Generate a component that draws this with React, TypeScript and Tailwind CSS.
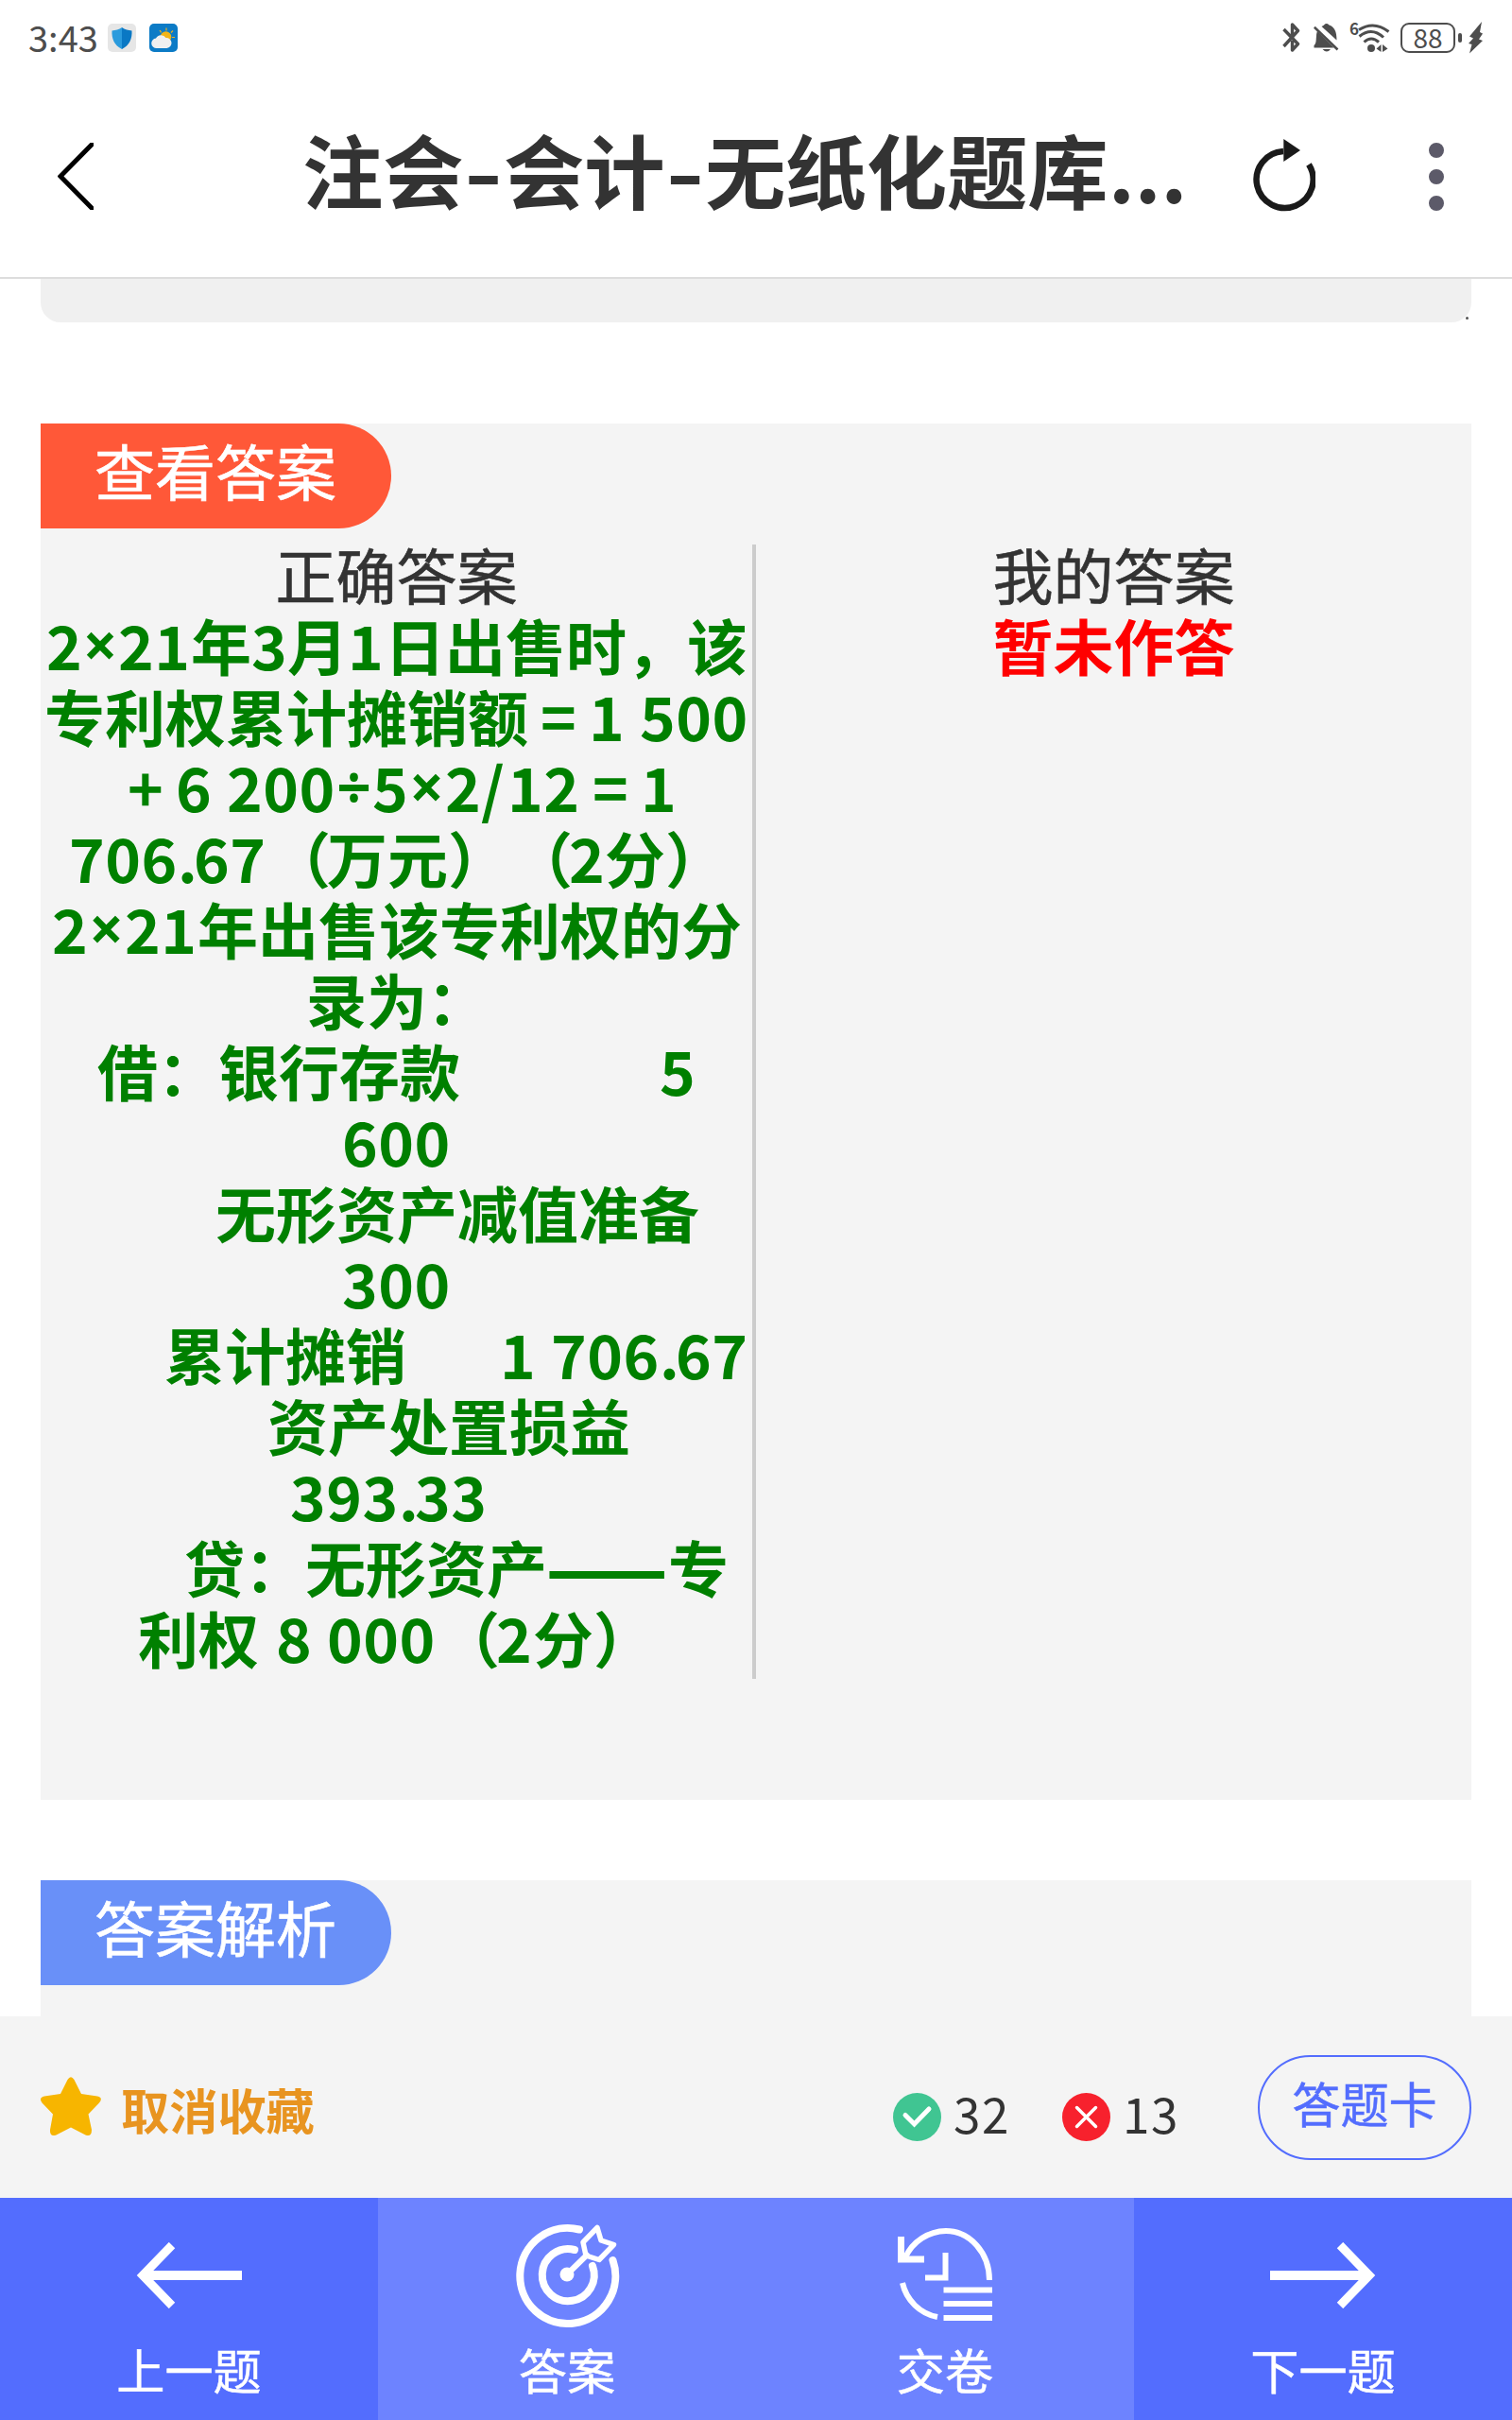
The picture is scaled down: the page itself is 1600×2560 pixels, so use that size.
import React from 'react';

type Segment = { text: string; box: string };

const answerLines: { indent: string; parts: Segment[] }[] = [
  {
    indent: 'pl-[6px]',
    parts: [
      { text: '2', box: 'w-[38px] num' },
      { text: '×', box: 'w-[38px] sym' },
      { text: '21', box: 'w-[77px] num' },
      { text: '年', box: 'w-[64px]' },
      { text: '3', box: 'w-[38px] num' },
      { text: '月', box: 'w-[64px]' },
      { text: '1', box: 'w-[39px] num' },
      { text: '日出售时，该', box: 'w-[384px]' },
    ],
  },
  {
    indent: 'pl-[4px]',
    parts: [
      { text: '专利权累计摊销额', box: 'w-[512px]' },
      { text: '=', box: 'w-[64px] text-center' },
      { text: '1', box: 'w-[54px] num' },
      { text: '500', box: 'w-[115px] num' },
    ],
  },
  {
    indent: 'pl-[79px]',
    parts: [
      { text: '+', box: 'w-[64px] text-center' },
      { text: '6', box: 'w-[54px] num' },
      { text: '200', box: 'w-[115px] num' },
      { text: '÷', box: 'w-[39px] sym' },
      { text: '5', box: 'w-[38px] num' },
      { text: '×', box: 'w-[39px] sym' },
      { text: '2', box: 'w-[38px] num' },
      { text: '/', box: 'w-[28px] num' },
      { text: '12', box: 'w-[77px] num' },
      { text: '=', box: 'w-[64px] text-center' },
      { text: '1', box: 'w-[38px] num' },
    ],
  },
  {
    indent: 'pl-[30px]',
    parts: [
      { text: '706', box: 'w-[115px] num' },
      { text: '.', box: 'w-[17px] num' },
      { text: '67', box: 'w-[77px] num' },
      { text: '（', box: 'w-[64px] open' },
      { text: '万元', box: 'w-[128px]' },
      { text: '）', box: 'w-[64px]' },
      { text: '（', box: 'w-[64px] open' },
      { text: '2', box: 'w-[38px] num' },
      { text: '分）', box: 'w-[128px]' },
    ],
  },
  {
    indent: 'pl-[12px]',
    parts: [
      { text: '2', box: 'w-[38px] num' },
      { text: '×', box: 'w-[39px] sym' },
      { text: '21', box: 'w-[77px] num' },
      { text: '年出售该专利权的分', box: 'w-[576px]' },
    ],
  },
  { indent: 'pl-[281px]', parts: [{ text: '录为：', box: 'w-[192px]' }] },
  {
    indent: 'pl-[60px]',
    parts: [
      { text: '借：银行存款', box: 'w-[595px]' },
      { text: '5', box: 'w-[38px] num' },
    ],
  },
  { indent: 'pl-[319px]', parts: [{ text: '600', box: 'w-[115px] num' }] },
  { indent: 'pl-[185px]', parts: [{ text: '无形资产减值准备', box: 'w-[512px]' }] },
  { indent: 'pl-[319px]', parts: [{ text: '300', box: 'w-[115px] num' }] },
  {
    indent: 'pl-[131px]',
    parts: [
      { text: '累计摊销', box: 'w-[355px]' },
      { text: '1', box: 'w-[54px] num' },
      { text: '706', box: 'w-[115px] num' },
      { text: '.', box: 'w-[17px] num' },
      { text: '67', box: 'w-[77px] num' },
    ],
  },
  { indent: 'pl-[240px]', parts: [{ text: '资产处置损益', box: 'w-[384px]' }] },
  {
    indent: 'pl-[264px]',
    parts: [
      { text: '393', box: 'w-[115px] num' },
      { text: '.', box: 'w-[17px] num' },
      { text: '33', box: 'w-[77px] num' },
    ],
  },
  {
    indent: 'pl-[152px]',
    parts: [
      { text: '贷：无形资产', box: 'w-[384px]' },
      { text: '——', box: 'w-[128px] origin-left scale-x-[1.160] [-webkit-text-stroke:2px_#008000]' },
      { text: '专', box: 'w-[64px]' },
    ],
  },
  {
    indent: 'pl-[103px]',
    parts: [
      { text: '利权', box: 'w-[146px]' },
      { text: '8', box: 'w-[54px] num' },
      { text: '000', box: 'w-[115px] num' },
      { text: '（', box: 'w-[64px] open' },
      { text: '2', box: 'w-[39px] num' },
      { text: '分）', box: 'w-[128px]' },
    ],
  },
];

function StatusBar() {
  return (
    <div className="flex h-[80px] shrink-0 items-start text-[#4d4d4d]">
      <span className="ml-[30px] mt-[14px] w-[84px] text-[38px] leading-[50px]">3:43</span>
      <svg className="mt-[25px] h-[30px] w-[30px]" viewBox="0 0 30 30">
        <rect width="30" height="30" rx="5" fill="#e6e6e6" />
        <path d="M15 4 C12 6.500 8 7 4.500 7.500 C4 16 7 23 15 27 Z" fill="#2b9bdd" />
        <path d="M15 4 C18 6.500 22 7 25.500 7.500 C26 16 23 23 15 27 Z" fill="#0a78c4" />
      </svg>
      <svg className="ml-[14px] mt-[25px] h-[30px] w-[30px]" viewBox="0 0 30 30">
        <rect width="30" height="30" rx="5" fill="#0c7bc6" />
        <path d="M11 7l1.500 2M18 4.500v3M25 7.500l-2 2M27 14.500h-3M12.500 9.500l-1-2" stroke="#e8b021" strokeWidth="1.200" />
        <circle cx="17.500" cy="14" r="5.800" fill="#f2b417" />
        <path d="M8 26 a5 5 0 0 1-1-10.500 a6 6 0 0 1 10.500-0.500 a5.500 5.500 0 0 1 1 11 z" fill="#f0f0f0" />
      </svg>
      <svg className="ml-[1169px] mt-[24px] h-[31px] w-[19px]" viewBox="0 0 19 31" fill="none" stroke="currentColor" strokeWidth="3.400">
        <path d="M1.500 7 L16.500 22.500 L10.500 29 V19 M1.500 25 L16.500 8.500 L10.500 2 V13" strokeLinejoin="round" />
      </svg>
      <svg className="ml-[14px] mt-[24px] h-[31px] w-[27px]" viewBox="0 0 27 31" fill="currentColor">
        <path d="M8.500 4 C10 3 11 3 11.500 2 C12.500 0.500 15 0.500 16.500 2.500 C22 4.500 24.500 9 24.500 18.500 Z" />
        <path d="M4 9 L21.500 26.500 H0.500 V24 C3 22 2.500 19 3 14 C3 12 3.500 10 4 9 Z" />
        <path d="M9.500 28 H18 Q14 33 9.500 28 Z" />
        <path d="M0.800 4.800 L25.500 28.500" stroke="currentColor" strokeWidth="2.600" />
      </svg>
      <span className="ml-[11px] mt-[19px] w-[9px] text-[17px] font-bold leading-[22px]">6</span>
      <svg className="mt-[24px] h-[31px] w-[34px]" viewBox="0 0 34 31" fill="none" stroke="currentColor" strokeWidth="3">
        <path d="M1 7.500 Q17 -2.500 32.500 9.500 M1.500 14.500 Q14.500 4 27 15.500 M6.500 20.500 Q14 13.500 22 20.500" />
        <circle cx="14" cy="27" r="4" fill="currentColor" stroke="none" />
        <path d="M19.500 27.500 L24.500 23 V31 Z M26 23 L31.500 27.500 L26 31 Z" fill="currentColor" stroke="none" />
      </svg>
      <div className="ml-[11px] mt-[24px] flex h-[32px] w-[58px] items-center justify-center rounded-[9px] border-2 border-[#4d4d4d] pb-[3px] text-[28px] leading-none">
        88
      </div>
      <div className="ml-[3px] mt-[35px] h-[10px] w-[4px] rounded-[2px] bg-[#4d4d4d]" />
      <svg className="ml-[7px] mt-[23px] h-[34px] w-[15px]" viewBox="0 0 15 34" fill="currentColor">
        <path d="M14 0 L1 15.500 L5 17.500 L0 23 L3.500 24 L1 33.500 L15 20 L11 18.500 L15 12.500 L12 11 Z" />
      </svg>
    </div>
  );
}

function TitleBar() {
  return (
    <div className="flex h-[213px] shrink-0 items-start text-[#333]">
      <svg className="ml-[61px] mt-[71px] h-[71px] w-[38px]" viewBox="0 0 38 71" fill="none" stroke="#000" strokeWidth="5">
        <path d="M39 -1 L3 35.500 L39 72" />
      </svg>
      <h1 className="ml-[221px] mt-[38px] flex w-[940px] whitespace-pre text-[85.330px] font-bold leading-[120px]">
        <span className="w-[170px]">注会</span>
        <span className="w-[43px] scale-x-[1.300] text-center">-</span>
        <span className="w-[171px]">会计</span>
        <span className="w-[42px] scale-x-[1.300] text-center">-</span>
        <span className="w-[427px]">无纸化题库</span>
        <span>...</span>
      </h1>
      <svg className="ml-[64px] mt-[66px] h-[78px] w-[68px]" viewBox="0 0 68 78">
        <path d="M34 14 A30 30 0 1 0 61 28" fill="none" stroke="#1a1a1a" strokeWidth="6.500" />
        <path d="M34.300 1 L52 13 L34.300 25 Z" fill="#1a1a1a" />
      </svg>
      <div className="ml-[120px] mt-[71px] flex flex-col gap-3">
        <i className="size-4 rounded-full bg-[#5c5a69]" />
        <i className="size-4 rounded-full bg-[#5c5a69]" />
        <i className="size-4 rounded-full bg-[#5c5a69]" />
      </div>
    </div>
  );
}

function AnswerPanel() {
  return (
    <section className="mx-[43px] mt-[107px] h-[1456px] shrink-0 bg-[#f4f4f4] text-[64px] leading-[75px]">
      <div className="h-[111px] w-[371px] rounded-r-full bg-[#ff5838] pl-[57px] leading-[97px] text-white [-webkit-text-stroke:0.600px_#fff]">查看答案</div>
      <div className="mt-[17px] flex h-[1200px]">
        <div className="w-[757px] border-r-[4px] border-[#ccc]">
          <div className="-mt-[7px] text-center text-[#333] [-webkit-text-stroke:0.600px_#333]">正确答案</div>
          {answerLines.map((line, i) => (
            <div key={i} className={`flex whitespace-pre font-bold text-[#008000] ${line.indent}`}>
              {line.parts.map((part, j) => (
                <span key={j} className={`h-[75px] shrink-0 ${part.box}`}>{part.text}</span>
              ))}
            </div>
          ))}
        </div>
        <div className="-mt-[7px] flex-1 text-center">
          <div className="text-[#333] [-webkit-text-stroke:0.600px_#333]">我的答案</div>
          <div className="font-bold text-[#f00]">暂未作答</div>
        </div>
      </div>
    </section>
  );
}

function Toolbar() {
  return (
    <div className="flex h-[192px] shrink-0 items-start bg-[#f4f4f4] text-[51.200px] leading-[60px] text-[#333]">
      <svg className="ml-[43px] mt-[64px] h-[64px] w-[64px]" viewBox="0 0 64 64">
        <path
          d="M28.500 3 Q32 -2.500 35.500 3 L43 18 L60 20.500 Q66.500 22 62 27.500 L50.500 39.500 L54 56 Q54 64 47.500 61.500 L32 53.500 L16.500 61.500 Q9.500 64 10 56 L13 39.500 L1.500 27.500 Q-2.500 22 4 20.500 L21 18 Z"
          fill="#f7b500"
        />
      </svg>
      <span className="ml-[21px] mt-[68px] w-[817px] font-bold text-[#e89420]">取消收藏</span>
      <svg className="mt-[81px] h-[51px] w-[51px]" viewBox="0 0 51 51">
        <circle cx="25.500" cy="25.500" r="25.500" fill="#40c592" />
        <path d="M13 23.500 L22.500 33 L38 17" fill="none" stroke="#fff" strokeWidth="5" strokeLinecap="round" />
      </svg>
      <span className="ml-[13px] mt-[72px] w-[115px] tracking-[1.500px]">32</span>
      <svg className="mt-[81px] h-[51px] w-[51px]" viewBox="0 0 51 51">
        <circle cx="25.500" cy="25.500" r="25.500" fill="#f7212d" />
        <path d="M15.500 15.500 L35.500 35.500 M35.500 15.500 L15.500 35.500" fill="none" stroke="#fff" strokeWidth="3.500" strokeLinecap="round" />
      </svg>
      <span className="ml-[13px] mt-[72px] w-[143px] tracking-[1.500px]">13</span>
      <button className="mt-[41px] h-[111px] w-[226px] rounded-full border-2 border-[#536dfe] pb-[12px] text-[#536dfe] [-webkit-text-stroke:0.500px_#536dfe]">答题卡</button>
    </div>
  );
}

function NavItem({ label, className, children }: { label: string; className: string; children: React.ReactNode }) {
  return (
    <button className={`flex flex-1 flex-col items-center ${className}`}>
      <div className="flex h-[164px] items-center">{children}</div>
      <span className="-mt-[13px] leading-[60px] [-webkit-text-stroke:0.500px_#fff]">{label}</span>
    </button>
  );
}

export default function App() {
  return (
    <div className='flex h-[2560px] w-[1600px] flex-col overflow-hidden bg-white font-["Noto_Sans_CJK_SC",sans-serif] [text-spacing-trim:space-all] [&_.num]:tracking-[0.500px] [&_.open]:pl-[4px] [&_.sym]:text-center [&_.sym]:font-["Noto_Sans",sans-serif]'>
      <StatusBar />
      <TitleBar />
      <div className="h-[2px] shrink-0 bg-[#ddd]" />
      <div className="relative mx-[43px] h-[46px] shrink-0 rounded-b-[21px] bg-[#f0f0f0]">
        <i className="absolute bottom-[3px] right-[3px] size-[3px] rounded-full bg-[#555]" />
      </div>
      <AnswerPanel />
      <section className="mx-[43px] mt-[85px] h-[144px] shrink-0 bg-[#f4f4f4] text-[64px]">
        <div className="h-[111px] w-[371px] rounded-r-full bg-[#6990f8] pl-[57px] leading-[97px] text-white [-webkit-text-stroke:0.600px_#fff]">答案解析</div>
      </section>
      <Toolbar />
      <nav className="flex h-[235px] shrink-0 text-[51.200px] text-white">
        <NavItem label="上一题" className="bg-[#536dfe]">
          <svg className="h-[70px] w-[112px]" viewBox="0 0 112 70" fill="none" stroke="#fff">
            <path d="M112 35 H8" strokeWidth="10" />
            <path d="M38 3 L7 35 L38 67" strokeWidth="9" />
          </svg>
        </NavItem>
        <NavItem label="答案" className="bg-[#6d83ff]">
          <svg className="-mt-[3px] h-[112px] w-[112px]" viewBox="0 0 112 112" fill="none" stroke="#fff" strokeLinecap="round">
            <path d="M69 8.500 A50.500 50.500 0 1 0 104.500 41" strokeWidth="8" />
            <path d="M64 30 A27.500 27.500 0 1 0 83 47" strokeWidth="8" />
            <circle cx="56" cy="56" r="7.500" fill="#fff" stroke="none" />
            <path d="M56 56 L77 35.500" strokeWidth="6" />
            <path d="M88 6.500 L92 20 L105.500 24.500 L90 40.500 L76 36 L73 22 Z" strokeWidth="5.500" strokeLinejoin="round" />
          </svg>
        </NavItem>
        <NavItem label="交卷" className="bg-[#6d83ff]">
          <svg className="-mt-[2px] h-[98px] w-[100px]" viewBox="0 0 100 98" fill="none" stroke="#fff" strokeWidth="6">
            <path d="M8 31 A48 48 0 0 1 51 3 A46 52 0 0 1 97 55" />
            <path d="M5 58 A47 47 0 0 0 42 94" />
            <path d="M3.500 9 V33 H28" strokeWidth="7" />
            <path d="M50.500 26 V52.500 H29" />
            <path d="M48.500 65.500 H100 M48.500 80 H100 M48.500 95 H100" />
          </svg>
        </NavItem>
        <NavItem label="下一题" className="bg-[#536dfe]">
          <svg className="h-[70px] w-[112px]" viewBox="0 0 112 70" fill="none" stroke="#fff">
            <path d="M0 35 H104" strokeWidth="10" />
            <path d="M74 3 L105 35 L74 67" strokeWidth="9" />
          </svg>
        </NavItem>
      </nav>
    </div>
  );
}
